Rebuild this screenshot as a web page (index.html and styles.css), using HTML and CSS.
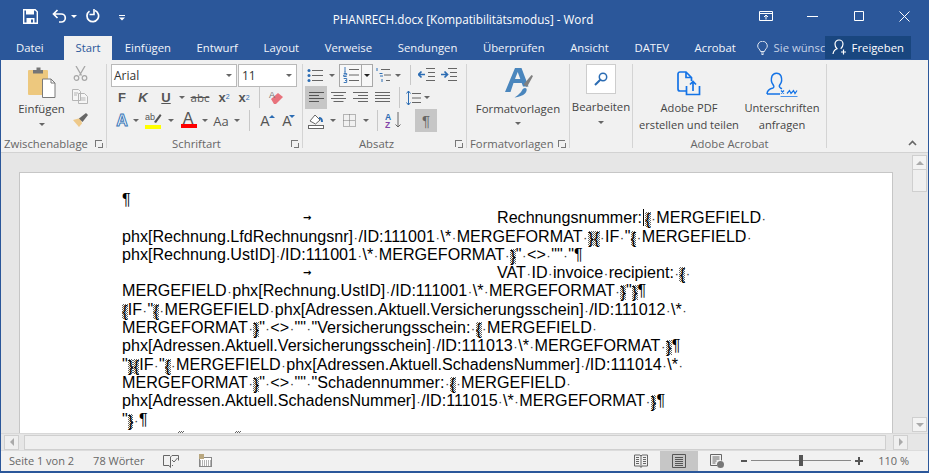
FILE: index.html
```html
<!DOCTYPE html>
<html lang="de">
<head>
<meta charset="utf-8">
<title>PHANRECH.docx - Word</title>
<link rel="stylesheet" href="styles.css">
</head>
<body>
<div class="app">
  <header class="titlebar">
    <div class="qat">
      <svg class="q-save" width="15" height="15" viewBox="0 0 15 15"><path d="M.7.7h11.5l2.100 2.100v11.500H.7z" fill="none" stroke="#fff" stroke-width="1.400"/><path d="M3 1v4.500h8V1zM3.500 9h8v5.500h-8z" fill="#fff"/><rect x="8" y="10.500" width="2" height="3" fill="#2b579a"/></svg>
      <svg class="q-undo" width="15" height="14" viewBox="0 0 15 14"><path d="M5.500 1 1.500 5l4 4M1.800 5h7.500a4 4 0 0 1 4 4v0a4 4 0 0 1-4 4H7" fill="none" stroke="#fff" stroke-width="1.700"/></svg>
      <span class="ar q-ar white"></span>
      <svg class="q-redo" width="14" height="14" viewBox="0 0 14 14"><path d="M9 1.500a5.800 5.800 0 1 1-5.500.6" fill="none" stroke="#fff" stroke-width="1.700"/><path d="M8 0v5.500h-4.500" fill="none" stroke="#fff" stroke-width="1.600"/></svg>
      <svg class="q-cust" width="6" height="6" viewBox="0 0 6 6"><path d="M0 .5h6" stroke="#fff"/><path d="M0 2.500h6L3 5.500z" fill="#fff"/></svg>
    </div>
    <div class="title">PHANRECH.docx [Kompatibilitätsmodus] - Word</div>
    <div class="winbtns">
      <svg class="w-rib" width="14" height="10" viewBox="0 0 14 10"><path d="M.5.500h13v9H.5zM.5 2.500h13M7 8.500V4M5 6l2-2 2 2" fill="none" stroke="#fff"/></svg>
      <svg class="w-min" width="11" height="1" viewBox="0 0 11 1"><path d="M0 .5h11" stroke="#fff"/></svg>
      <svg class="w-max" width="10" height="10" viewBox="0 0 10 10"><path d="M.5.500h9v9h-9z" fill="none" stroke="#fff"/></svg>
      <svg class="w-close" width="11" height="11" viewBox="0 0 11 11"><path d="M.5.500l10 10M10.500.500l-10 10" stroke="#fff" fill="none"/></svg>
    </div>
  </header>
  <nav class="tabs">
    <span class="tab t-datei">Datei</span>
    <span class="tab active">Start</span>
    <span class="tab">Einfügen</span>
    <span class="tab">Entwurf</span>
    <span class="tab">Layout</span>
    <span class="tab">Verweise</span>
    <span class="tab">Sendungen</span>
    <span class="tab">Überprüfen</span>
    <span class="tab">Ansicht</span>
    <span class="tab">DATEV</span>
    <span class="tab">Acrobat</span>
    <span class="tell">
      <svg width="11" height="14" viewBox="0 0 11 14"><path d="M3.500 10.500C3 8 .7 7.500.7 5a4.800 4.800 0 0 1 9.600 0c0 2.500-2.300 3-2.800 5.500zM4 12h3M4.500 13.500h2" fill="none" stroke="#dfe6f1"/></svg>
      <span class="tell-text">Sie wünsc</span>
    </span>
    <span class="share">
      <svg width="16" height="16" viewBox="0 0 16 16"><path d="M1 15c.5-3 2-4.500 4-5.200C3.500 8.500 3 7 3 5a4 4 0 0 1 8 0c0 2-.8 3.500-2.300 4.800" fill="none" stroke="#fff" stroke-width="1.200"/><path d="M11.500 10.500v5M9 13h5" stroke="#fff" stroke-width="1.200"/></svg>
      Freigeben
    </span>
  </nav>

  <section class="ribbon">
    <div class="grp g1">
      <div class="body clip-body">
        <div class="paste">
          <svg width="30" height="32" viewBox="0 0 30 32"><rect x="1" y="3" width="20" height="25" rx="1" fill="#edc87e"/><path d="M6 4V3h3.500V.5h4V3H16v3.500H6z" fill="#767676"/><path d="M15.500 12H24l4 4v14.500H15.500z" fill="#fff" stroke="#7a7a7a"/><path d="M24 12v4h4" fill="none" stroke="#7a7a7a"/></svg>
          <span class="paste-label">Einfügen</span>
          <span class="ar"></span>
        </div>
        <div class="clip-tools">
          <svg width="15" height="15" viewBox="0 0 15 15"><path d="M3 0l5.500 9.500M12 0 6.500 9.500" stroke="#a6a6a6" stroke-width="1.300"/><circle cx="3.500" cy="12" r="2.300" fill="none" stroke="#a6a6a6" stroke-width="1.200"/><circle cx="11.500" cy="12" r="2.300" fill="none" stroke="#a6a6a6" stroke-width="1.200"/></svg>
          <svg width="16" height="15" viewBox="0 0 16 15"><path d="M.5.500h6l2 2v9h-8zM6.500 4.500h6l3 3v7h-9zM2 4h4M2 6h3M8.500 9h5M8.500 11h5" fill="#f6f6f6" stroke="#b5b5b5"/></svg>
          <svg width="17" height="16" viewBox="0 0 17 16"><path d="M1 8l6 7 3-3.500L8.500 6z" fill="#eec98a"/><path d="M7 6.500 10.500 10 16 3l-2-2z" fill="#666"/></svg>
        </div>
      </div>
      <div class="label"><span>Zwischenablage</span><i class="launch"></i></div>
    </div>

    <div class="grp g2">
      <div class="body rows">
        <div class="row r1 combos">
          <span class="combo c-font">Arial<span class="ar"></span></span>
          <span class="combo c-size">11<span class="ar"></span></span>
        </div>
        <div class="row r2 ml1">
          <span class="it w20 fmt">F</span>
          <span class="it w22 fmt ital">K</span>
          <span class="it w24 fmt und">U</span>
          <span class="ar w8"></span>
          <span class="it w28 strike">abc</span>
          <span class="it w20 fmt sub">x<small class="blue">2</small></span>
          <span class="it w20 fmt sup">x<small class="blue">2</small></span>
          <span class="sep w10"></span>
          <span class="it w24"><svg width="16" height="16" viewBox="0 0 16 16"><path d="M3 9l7-6 5 4-7 7H6z" fill="#e8727c"/><text x="1" y="8" font-size="9" font-family="Liberation Sans" fill="#777">A</text></svg></span>
        </div>
        <div class="row r3 ml1">
          <span class="it w20 glowa">A</span>
          <span class="ar w8"></span>
          <span class="it w27"><svg width="17" height="17" viewBox="0 0 17 17"><text x="0" y="8" font-size="9" font-family="Liberation Sans" fill="#555">ab</text><path d="M9 10l6-8 1.500 1.500L11 11z" fill="#555"/><rect y="13" width="16" height="4" fill="#ff0"/></svg></span>
          <span class="ar w8"></span>
          <span class="it w26 col-a">A</span>
          <span class="ar w8"></span>
          <span class="it w24 aa">Aa</span>
          <span class="ar w8"></span>
          <span class="sep w16"></span>
          <span class="it w16 grow up">A</span>
          <span class="it w28 grow down">A</span>
        </div>
      </div>
      <div class="label center launchable"><span>Schriftart</span><i class="launch"></i></div>
    </div>

    <div class="grp g3">
      <div class="body rows">
        <div class="row r1">
          <span class="it w24"><svg width="16" height="15" viewBox="0 0 16 15"><path d="M5 2.500h11M5 7.500h11M5 12.500h11" stroke="#666"/><circle cx="2" cy="2.500" r="1.500" fill="#2b6cb3"/><circle cx="2" cy="7.500" r="1.500" fill="#2b6cb3"/><circle cx="2" cy="12.500" r="1.500" fill="#2b6cb3"/></svg></span>
          <span class="ar w10"></span>
          <span class="split">
            <span class="split-main"><svg width="16" height="16" viewBox="0 0 16 16"><path d="M6 2.500h10M6 8h10M6 13.500h10" stroke="#666"/><path d="M2 0v4.500M1 5h2M.7 6.500h3v1.500h-3v1.500h3M.7 11.500h3v4h-3M2 13.500h1.500" stroke="#2b6cb3" fill="none" stroke-width=".9"/></svg></span>
            <span class="split-btn"><span class="ar dark"></span></span>
          </span>
          <span class="it w21"><svg width="16" height="16" viewBox="0 0 16 16"><path d="M5 2.500h9M8 8h7M10 13.500h4" stroke="#666"/><path d="M1 1v3M3.500 6.500h3M4 9h3M6 12v3" stroke="#2b6cb3" fill="none"/></svg></span>
          <span class="ar w8"></span>
          <span class="sep w16"></span>
          <span class="it w16"><svg width="17" height="14" viewBox="0 0 17 14"><path d="M8 .5h9M10 4.500h7M10 8.500h7M8 12.500h9" stroke="#666"/><path d="M7 6.500H1M3.500 3.500l-3 3 3 3" stroke="#2b6cb3" stroke-width="1.700" fill="none"/></svg></span>
          <span class="it w16 m6"><svg width="17" height="14" viewBox="0 0 17 14"><path d="M8 .5h9M10 4.500h7M10 8.500h7M8 12.500h9" stroke="#666"/><path d="M1 6.500h6M4.500 3.500l3 3-3 3" stroke="#2b6cb3" stroke-width="1.700" fill="none"/></svg></span>
        </div>
        <div class="row r2 ml2">
          <span class="it w22 on"><svg width="15" height="11" viewBox="0 0 15 11"><path d="M0 .5h15M0 3.500h10M0 6.500h15M0 9.500h10" stroke="#555"/></svg></span>
          <span class="it w22"><svg width="15" height="11" viewBox="0 0 15 11"><path d="M0 .5h15M2.500 3.500h10M0 6.500h15M2.500 9.500h10" stroke="#666"/></svg></span>
          <span class="it w22"><svg width="15" height="11" viewBox="0 0 15 11"><path d="M0 .5h15M5 3.500h10M0 6.500h15M5 9.500h10" stroke="#666"/></svg></span>
          <span class="it w22"><svg width="15" height="11" viewBox="0 0 15 11"><path d="M0 .5h15M0 3.500h15M0 6.500h15M0 9.500h15" stroke="#666"/></svg></span>
          <span class="sep w12"></span>
          <span class="it w16"><svg width="15" height="16" viewBox="0 0 15 16"><path d="M6 3.500h9M6 8h9M6 12.500h9" stroke="#666"/><path d="M2.500 1v14M.5 3.500l2-2.500 2 2.500M.5 12.500l2 2.500 2-2.500" stroke="#2b6cb3" fill="none"/></svg></span>
          <span class="ar w12"></span>
        </div>
        <div class="row r3">
          <span class="it w26"><svg width="16" height="16" viewBox="0 0 16 16"><path d="M2 8l5-6 5 5-4.500 4z" fill="#fff" stroke="#666"/><path d="M11 5c2 0 3 2 3 4" stroke="#2b6cb3" stroke-width="2" fill="none"/><rect x=".5" y="12.500" width="15" height="3" fill="#fff" stroke="#666"/></svg></span>
          <span class="ar w8"></span>
          <span class="it w24"><svg width="13" height="13" viewBox="0 0 13 13"><path d="M.5.500h12v12H.5zM6.500.5v12M.5 6.500h12" fill="none" stroke="#777" stroke-dasharray="1 1"/></svg></span>
          <span class="ar w10"></span>
          <span class="sep w12"></span>
          <span class="it w20"><svg width="16" height="17" viewBox="0 0 16 17"><path d="M13 0v15M10.500 12.500 13 15l2.500-2.500" stroke="#666" fill="none"/><text x="0" y="7.500" font-size="8.500" font-weight="700" font-family="Liberation Sans" fill="#2b6cb3">A</text><text x="0" y="16" font-size="8.500" font-weight="700" font-family="Liberation Sans" fill="#8345a8">Z</text></svg></span>
          <span class="it w22 on m10 pil">¶</span>
        </div>
      </div>
      <div class="label center launchable"><span>Absatz</span><i class="launch"></i></div>
    </div>

    <div class="grp g4">
      <div class="body big">
        <svg width="28" height="31" viewBox="0 0 28 31"><path d="M0 25 10 1h6.500l7 18.500h-5.500L16.700 16H8.500L5.500 25z" fill="#4a86bd"/><path d="M10 12h5.300L12.700 5z" fill="#f1f1f1"/><path d="M18.500 17.500 26.500 8l1.500 1-6 11z" fill="#808080"/><path d="M15 26c2-1 2-5 5-5 2.500 0 2 3.500 0 5.500-2 2-6 3.500-10.500 4 2-1 4-3 5.500-4.500z" fill="#4a86bd"/></svg>
        <span class="big-label">Formatvorlagen</span>
        <span class="ar"></span>
      </div>
      <div class="label"><span>Formatvorlagen</span><i class="launch"></i></div>
    </div>

    <div class="grp g5">
      <div class="body big">
        <span class="find"><svg width="14" height="14" viewBox="0 0 14 14"><circle cx="9" cy="5" r="3.700" fill="none" stroke="#2b6cb3" stroke-width="1.500"/><path d="M6.300 7.700 1 13" stroke="#2b6cb3" stroke-width="2"/></svg></span>
        <span class="big-label find-label">Bearbeiten</span>
        <span class="ar"></span>
      </div>
      <div class="label"></div>
    </div>

    <div class="grp g6">
      <div class="body acro">
        <div class="acro-btn a-pdf">
          <svg width="24" height="26" viewBox="0 0 24 26"><path d="M9 20H3a2 2 0 0 1-2-2V3a2 2 0 0 1 2-2h6l5.500 5.500V10M9 1v5.500h5.500" fill="none" stroke="#1473e6" stroke-width="1.700"/><path d="M9.500 15v8.500h13V15M16 20v-9M13 13.500l3-3 3 3" fill="none" stroke="#1473e6" stroke-width="1.700"/></svg>
          <span>Adobe PDF<br>erstellen und teilen</span>
        </div>
        <div class="acro-btn a-sign">
          <svg width="32" height="26" viewBox="0 0 32 26"><path d="M1 23c0-3 2-5 6-6 1.500-1 1-2 0-3.500C5 11 5 8 6 5c1.500-3.500 7-4 9 0 1 3 1 6-1 8.500-1 1.500-1 2.500.5 3.500.5.500 1 .5 1.500.7M1 23h13" fill="none" stroke="#1473e6" stroke-width="1.500"/><path d="M14.500 26h17" stroke="#1473e6" stroke-width="1.500"/><path d="M15 19.500l3 3M18 19.500l-3 3M21 22.500l2.500-3 1.500 3 2.500-3 1.500 3 2-3" stroke="#1473e6" fill="none" stroke-width="1.200"/></svg>
          <span>Unterschriften<br>anfragen</span>
        </div>
      </div>
      <div class="label center"><span>Adobe Acrobat</span></div>
    </div>
    <div class="collapse"><svg width="9" height="6" viewBox="0 0 9 6"><path d="M1 5l3.500-3.500L8 5" fill="none" stroke="#666" stroke-width="1.600"/></svg></div>
  </section>

  <main class="workspace">
    <div class="canvas">
      <article class="page">
        <div class="ln"><span class="pm">¶</span></div>
        <div class="ln"><span class="tabc">→</span>Rechnungsnummer:<span class="caret"></span><span class="fb">{</span><i>·</i>MERGEFIELD<i>·</i></div>
        <div class="ln">phx[Rechnung.LfdRechnungsnr]<i>·</i>/ID:111001<i>·</i>\*<i>·</i>MERGEFORMAT<i>·</i><span class="fb">}</span><span class="fb">{</span><i>·</i>IF<i>·</i>"<span class="fb">{</span><i>·</i>MERGEFIELD<i>·</i></div>
        <div class="ln">phx[Rechnung.UstID]<i>·</i>/ID:111001<i>·</i>\*<i>·</i>MERGEFORMAT<i>·</i><span class="fb">}</span>"<i>·</i>&lt;&gt;<i>·</i>""<i>·</i>"<span class="pm">¶</span></div>
        <div class="ln"><span class="tabc">→</span>VAT<i>·</i>ID<i>·</i>invoice<i>·</i>recipient:<i>·</i><span class="fb">{</span><i>·</i></div>
        <div class="ln">MERGEFIELD<i>·</i>phx[Rechnung.UstID]<i>·</i>/ID:111001<i>·</i>\*<i>·</i>MERGEFORMAT<i>·</i><span class="fb">}</span>"<span class="fb">}</span><span class="pm">¶</span></div>
        <div class="ln"><span class="fb">{</span>IF<i>·</i>"<span class="fb">{</span><i>·</i>MERGEFIELD<i>·</i>phx[Adressen.Aktuell.Versicherungsschein]<i>·</i>/ID:111012<i>·</i>\*<i>·</i></div>
        <div class="ln">MERGEFORMAT<i>·</i><span class="fb">}</span>"<i>·</i>&lt;&gt;<i>·</i>""<i>·</i>"Versicherungsschein:<i>·</i><span class="fb">{</span><i>·</i>MERGEFIELD<i>·</i></div>
        <div class="ln">phx[Adressen.Aktuell.Versicherungsschein]<i>·</i>/ID:111013<i>·</i>\*<i>·</i>MERGEFORMAT<i>·</i><span class="fb">}</span><span class="pm">¶</span></div>
        <div class="ln">"<span class="fb">}</span><span class="fb">{</span>IF<i>·</i>"<span class="fb">{</span><i>·</i>MERGEFIELD<i>·</i>phx[Adressen.Aktuell.SchadensNummer]<i>·</i>/ID:111014<i>·</i>\*<i>·</i></div>
        <div class="ln">MERGEFORMAT<i>·</i><span class="fb">}</span>"<i>·</i>&lt;&gt;<i>·</i>""<i>·</i>"Schadennummer:<i>·</i><span class="fb">{</span><i>·</i>MERGEFIELD<i>·</i></div>
        <div class="ln">phx[Adressen.Aktuell.SchadensNummer]<i>·</i>/ID:111015<i>·</i>\*<i>·</i>MERGEFORMAT<i>·</i><span class="fb">}</span><span class="pm">¶</span></div>
        <div class="ln">"<span class="fb">}</span><i>·</i><span class="pm">¶</span></div>
        <div class="ln stubs"><span class="stub"></span><span class="stub"></span></div>
      </article>
    </div>
    <aside class="vscroll">
      <span class="sbtn"><span class="ar up-ar"></span></span>
      <span class="vthumb"></span>
      <span class="vspace"></span>
      <span class="sbtn"><span class="ar down-ar"></span></span>
    </aside>
  </main>

  <div class="hscroll">
    <span class="sbtn h"><span class="tri-l"></span></span>
    <span class="hthumb"></span>
    <span class="sbtn h"><span class="tri-r"></span></span>
  </div>

  <footer class="status">
    <span class="st-a">Seite 1 von 2</span>
    <span class="st-b">78 Wörter</span>
    <svg class="st-c" width="16" height="14" viewBox="0 0 16 14"><path d="M7 1.500H.5v10H6l1.500 2V3L9 1.500h6.500v5M9 11.500h1" fill="none" stroke="#666"/><path d="M9 6l2 2 3.500-4" fill="none" stroke="#666"/></svg>
    <svg class="st-d" width="13" height="13" viewBox="0 0 13 13"><rect x=".5" y="3.500" width="12" height="9" fill="#fff" stroke="#888"/><rect x="0" y="0" width="5" height="5" fill="#b9a77f"/><path d="M5 7h7M5 9h7M5 11h7M1 7h3M1 9h3M1 11h3" stroke="#666" stroke-dasharray="1 1"/></svg>
    <span class="st-space"></span>
    <svg class="v-read" width="14" height="14" viewBox="0 0 14 14"><path d="M.5 1h5.500l1 1 1-1h5.500v11H8l-1 1.500L6 12H.5zM7 2v10M2 3.500h3M2 5.500h3M2 7.500h3M2 9.500h3M9 3.500h3M9 5.500h3M9 7.500h3M9 9.500h3" fill="none" stroke="#666"/></svg>
    <span class="v-print"><svg width="14" height="14" viewBox="0 0 14 14"><path d="M.5.500h13v13H.5zM3 3.500h8M3 5.500h8M3 7.500h8M3 9.500h8M3 11.500h8" fill="none" stroke="#555"/></svg></span>
    <svg class="v-web" width="14" height="14" viewBox="0 0 14 14"><path d="M7 11.500H.5V.5h11v6M2.500 3h7M2.500 5h7M2.500 7h4M2.500 9h3" fill="none" stroke="#666"/><circle cx="10.500" cy="10.500" r="3.500" fill="#777"/></svg>
    <span class="z-minus"></span>
    <span class="z-track"><span class="z-thumb"></span></span>
    <span class="z-plus"></span>
    <span class="z-val">110 %</span>
  </footer>
</div>
</body>
</html>
```

FILE: styles.css
```css
* { box-sizing: border-box; }
html, body { margin: 0; height: 100%; overflow: hidden; }
body { font-family: "Open Sans", "Liberation Sans", sans-serif; font-size: 11.4px; color: #444; }
svg { display: block; flex: none; }

.app { width: 929px; height: 473px; display: flex; flex-direction: column; border: solid #2b579a; border-width: 0 1px 2px; background: #e6e6e6; }

/* title bar */
.titlebar { height: 36px; flex: none; background: #2b579a; display: grid; grid-template-columns: 1fr auto 1fr; align-items: center; color: #fff; padding-bottom: 4px; }
.qat { display: flex; align-items: center; padding-left: 22px; }
.q-undo { margin-left: 14px; }
.q-ar { margin-left: 3px; width: 8px; }
.q-redo { margin-left: 8px; }
.q-cust { margin-left: 19px; margin-top: 4px; }
.title { font-size: 11.7px; padding-top: 6px; margin-left: -3px; }
.winbtns { display: flex; justify-content: flex-end; align-items: center; padding-right: 18px; }
.w-min { margin-left: 34px; }
.w-max { margin-left: 36px; }
.w-close { margin-left: 35px; }

/* tabs */
.tabs { height: 24px; flex: none; background: #2b579a; display: flex; align-items: stretch; color: #fff; }
.tab { padding: 0 12.800px 1px; display: flex; align-items: center; font-size: 11.300px; color: #f2f5fa; white-space: nowrap; }
.tab.t-datei { padding: 0 20px 1px 15px; width: 63px; }
.tab.active { background: #f1f1f1; color: #2b579a; padding: 0 11.500px 1px; width: 48px; }
.tell { display: flex; align-items: center; margin-left: 8px; color: #c5d2e6; width: 68px; flex: none; gap: 6px; overflow: hidden; white-space: nowrap; padding-bottom: 1px; }
.tell-text { font-size: 11.300px; }
.share { background: #19467f; height: 23px; width: 86px; display: flex; align-items: center; gap: 4px; padding: 0 0 1px 7px; color: #fff; font-size: 11.300px; flex: none; }

/* ribbon */
.ribbon { height: 93px; flex: none; background: #f1f1f1; border-bottom: 1px solid #d2d2d2; display: flex; padding: 4px 0 4px; }
.grp { display: flex; flex-direction: column; border-right: 1px solid #d4d4d4; flex: none; }
.g1 { width: 106px; }
.g2 { width: 196px; }
.g3 { width: 164px; }
.g4 { width: 103px; }
.g5 { width: 63px; }
.g6 { width: 194px; }
.body { flex: 1; min-height: 0; }
.label { height: 14px; flex: none; display: flex; align-items: center; position: relative; top: 3px; margin-top: -1px; color: #666; font-size: 11.300px; padding-left: 3px; line-height: 14px; white-space: nowrap; }
.label.center { justify-content: center; padding-left: 0; }
.label.launchable { padding-right: 16px; }
.launch { position: absolute; right: 4px; top: 3px; width: 7px; height: 7px; border: solid #777; border-width: 1px 0 0 1px; }
.launch::after { content: ""; position: absolute; right: -1px; bottom: -1px; width: 4px; height: 4px; border: solid #777; border-width: 0 1px 1px 0; }

.ar { display: inline-flex; align-items: center; justify-content: center; flex: none; }
.ar::before { content: ""; border: solid transparent; border-width: 3px 3px 0; border-top-color: #666; }
.ar.white::before { border-top-color: #fff; }
.ar.dark::before { border-top-color: #222; }
.up-ar::before { border-width: 0 4px 4px; border-color: transparent transparent #aaa; }
.down-ar::before { border-width: 4px 4px 0; border-top-color: #aaa; }

.w8 { width: 8px; } .w10 { width: 10px; } .w12 { width: 12px; } .w16 { width: 16px; }
.w20 { width: 20px; } .w21 { width: 21px; } .w22 { width: 22px; } .w24 { width: 24px; }
.w26 { width: 26px; } .w27 { width: 27px; } .w28 { width: 28px; }
.m6 { margin-left: 6px; } .m10 { margin-left: 12px; }
.ml1 { padding-left: 5px; } .ml2 { padding-left: 2px; }

/* clipboard */
.clip-body { display: flex; }
.paste { width: 55px; margin-left: 13px; display: flex; flex-direction: column; align-items: center; padding-top: 3px; }
.paste-label { margin-top: 2px; line-height: 16px; }
.paste .ar { height: 14px; }
.clip-tools { width: 22px; display: flex; flex-direction: column; align-items: center; gap: 8px; padding-top: 2px; }

/* rows */
.rows { display: flex; flex-direction: column; }
.row { display: flex; align-items: center; }
.r1 { height: 22px; }
.r2, .r3 { height: 23px; }
.r3 { align-items: stretch; }
.it { display: flex; align-items: center; justify-content: center; flex: none; }
.sep { align-self: stretch; flex: none; position: relative; margin: 1px 0; }
.sep::before { content: ""; position: absolute; left: 50%; top: 0; bottom: 0; width: 1px; background: #c8c8c8; }
.r3 > .ar, .r2 > .ar { align-self: stretch; }

.combos { padding-left: 4px; gap: 1px; }
.combo { height: 23px; background: #fff; border: 1px solid #b9b9b9; display: flex; align-items: center; justify-content: space-between; padding: 0 4px 0 2px; color: #333; font-size: 12px; }
.c-font { width: 126px; }
.c-size { width: 59px; padding-left: 3px; }

.fmt { font-family: "Liberation Sans", sans-serif; font-size: 13px; font-weight: 700; color: #555; }
.ital { font-style: italic; }
.und { text-decoration: underline; }
.strike { font-size: 11.500px; text-decoration: line-through; color: #555; }
.blue { color: #2b6cb3; font-size: 7px; font-weight: 400; }
.sub small { align-self: flex-end; margin-bottom: 5px; }
.sup small { align-self: flex-start; margin-top: 4px; }
.glowa { font-family: "Liberation Sans", sans-serif; font-size: 16px; color: #fff; font-weight: 700; -webkit-text-stroke: 1px #3a78b8; }
.col-a { font-family: "Liberation Sans", sans-serif; font-size: 16px; color: #555; padding-bottom: 3px; box-shadow: inset 6px 0 #f1f1f1, inset -4px 0 #f1f1f1; background: linear-gradient(#f1f1f1 15px, #f00 15px, #f00 19px, #f1f1f1 19px); }
.aa { font-size: 13px; color: #555; }
.grow { font-family: "Liberation Sans", sans-serif; font-size: 14px; color: #555; position: relative; }
.grow.up::after { content: ""; position: absolute; right: -2px; top: 6px; border: solid transparent; border-width: 0 3px 3px; border-bottom-color: #2b6cb3; }
.grow.down::after { content: ""; position: absolute; right: 6px; top: 6px; border: solid transparent; border-width: 3px 3px 0; border-top-color: #2b6cb3; }
.on { background: #c6c6c6; align-self: stretch; }
.pil { font-family: "Liberation Sans", sans-serif; font-size: 15px; color: #666; }

.split { width: 34px; height: 23px; margin-left: 2px; border: 1px solid #a8a8a8; display: flex; background: #f7f7f7; flex: none; }
.split-main { width: 21px; display: flex; align-items: center; justify-content: center; }
.split-btn { flex: 1; border-left: 1px solid #a8a8a8; display: flex; align-items: center; justify-content: center; }

/* large buttons */
.big { display: flex; flex-direction: column; align-items: center; }
.g4 .big svg { margin-top: 3px; margin-left: 1px; }
.big-label { line-height: 16px; margin-top: 5px; color: #444; }
.g4 .big-label { margin-top: 3px; }
.big .ar { height: 14px; }
.g4 .big .ar { height: 13px; }
.find { width: 30px; height: 30px; background: #fff; border: 1px solid #cdcdcd; display: flex; align-items: center; justify-content: center; }
.acro { display: flex; }
.acro-btn { display: flex; flex-direction: column; align-items: center; text-align: center; line-height: 17px; white-space: nowrap; font-size: 11.100px; }
.acro-btn svg { margin: 7px 0 2px; }
.acro-btn span { color: #444; }
.a-pdf { width: 112px; }
.a-sign { width: 74px; }
.collapse { flex: 1; display: flex; justify-content: flex-end; align-items: flex-end; padding: 0 11px 2px 0; }

/* document */
.workspace { flex: 1; min-height: 0; display: flex; background: #e6e6e6; }
.canvas { flex: 1; min-width: 0; padding: 19px 18px 0 18px; overflow: hidden; }
.page { height: 100%; background: #fff; border: 1px solid #c6c6c6; border-bottom: 0; padding: 17px 0 0 102px; font-family: "Liberation Sans", Arial, sans-serif; font-size: 16.130px; color: #000; overflow: hidden; }
.ln { height: 18.300px; line-height: 18.300px; white-space: nowrap; }
.ln i { font-style: normal; font-size: 13.400px; color: #333; padding: 0 .5px; }
.pm { font-size: 16.130px; }
.tabc { display: inline-block; width: 375px; padding-left: 181px; font-family: "DejaVu Sans", sans-serif; font-size: 10px; font-weight: 700; line-height: 10px; vertical-align: 2px; }
.fb { display: inline-block; height: 15px; line-height: 15px; padding: 0 .2px; vertical-align: -2px; background: conic-gradient(#666 25%, #fff 0 50%, #666 0 75%, #fff 0) 0 0 / 2px 2px; }
.caret { display: inline-block; width: 1px; height: 17px; background: #000; vertical-align: -3px; margin: 0 1px; }
.stubs { display: flex; align-items: flex-start; padding-left: 56px; gap: 51px; }
.stub { width: 6px; height: 2px; margin-top: 3px; background: conic-gradient(#666 25%, #fff 0 50%, #666 0 75%, #fff 0) 0 0 / 2px 2px; }

.vscroll { width: 17px; flex: none; display: flex; flex-direction: column; padding: 2px 0 1px 1px; }
.sbtn { width: 15px; height: 15px; background: #f3f3f3; border: 1px solid #cfcfcf; display: flex; align-items: center; justify-content: center; flex: none; }
.vthumb { height: 22px; width: 15px; background: #efefef; border: solid #cfcfcf; border-width: 0 1px 1px; flex: none; }
.vspace { flex: 1; }
.hscroll { height: 17px; flex: none; background: #e6e6e6; border-top: 1px solid #d8d8d8; display: flex; align-items: center; padding: 0 20px 0 3px; }
.sbtn.h { background: #efefef; }
.tri-l { border: solid transparent; border-width: 4px 4px 4px 0; border-right-color: #aaa; }
.tri-r { border: solid transparent; border-width: 4px 0 4px 4px; border-left-color: #aaa; }
.hthumb { flex: 1; height: 15px; margin: 0 7px 0 5px; background: #efefef; border: 1px solid #cfcfcf; }

/* status */
.status { height: 21px; flex: none; background: #f1f1f1; display: flex; align-items: center; color: #666; font-size: 11px; border-top: 1px solid #dcdcdc; padding-bottom: 1px; }
.st-a { margin-left: 8px; }
.st-b { margin-left: 19px; }
.st-c { margin-left: 19px; }
.st-d { margin-left: 20px; }
.st-space { flex: 1; }
.v-print { width: 38px; align-self: stretch; margin-bottom: -1px; background: #c6c6c6; display: flex; align-items: center; justify-content: center; margin-left: 12px; }
.v-web { margin-left: 12px; }
.z-minus { width: 6px; height: 2px; background: #555; margin-left: 17px; }
.z-track { width: 100px; height: 1px; background: #888; margin-left: 4px; display: flex; align-items: center; justify-content: center; }
.z-thumb { width: 4px; height: 11px; background: #555; flex: none; }
.z-plus { width: 8px; height: 8px; margin-left: 4px; background: linear-gradient(#555, #555) center / 8px 2px no-repeat, linear-gradient(#555, #555) center / 2px 8px no-repeat; }
.z-val { margin-left: 15px; margin-right: 19px; white-space: nowrap; font-size: 11px; }
```
